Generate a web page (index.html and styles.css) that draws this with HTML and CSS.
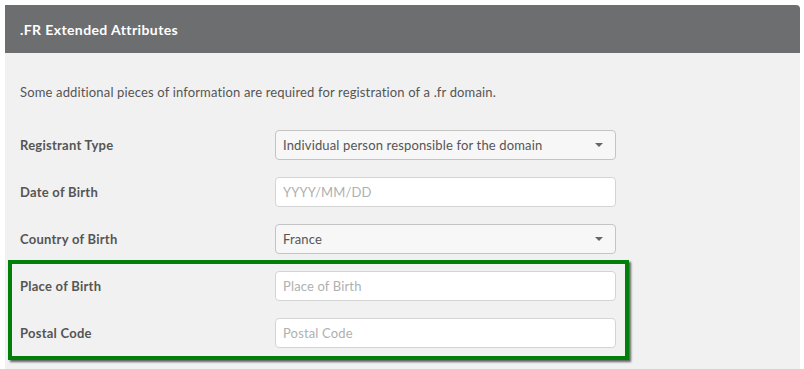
FILE: index.html
```html
<!DOCTYPE html>
<html lang="en">
<head>
    <meta charset="UTF-8">
    <title>.FR Extended Attributes</title>
    <link rel="stylesheet" href="styles.css">
</head>
<body>
    <div class="panel">
        <div class="panel-heading">
            <h3>.FR Extended Attributes</h3>
        </div>
        <div class="panel-body">
            <p class="intro">Some additional pieces of information are required for registration of a .fr domain.</p>
            <div class="form-row">
                <label>Registrant Type</label>
                <div class="select">Individual person responsible for the domain<span class="caret"></span></div>
            </div>
            <div class="form-row">
                <label>Date of Birth</label>
                <input type="text" placeholder="YYYY/MM/DD">
            </div>
            <div class="form-row">
                <label>Country of Birth</label>
                <div class="select">France<span class="caret"></span></div>
            </div>
            <div class="form-row">
                <label>Place of Birth</label>
                <input type="text" placeholder="Place of Birth">
            </div>
            <div class="form-row">
                <label>Postal Code</label>
                <input type="text" placeholder="Postal Code">
            </div>
            <div class="highlight"></div>
        </div>
    </div>
</body>
</html>
```

FILE: styles.css
```css
body {
    font-family: Lato, "Open Sans", sans-serif;
    margin: 0;
    padding: 5px 4px 0 5px;
    background-color: #fff;
    color: #555;
}
.panel {
    border-radius: 0 4px 4px 0;
    overflow: hidden;
}
.panel-heading {
    background-color: #6d6e70;
    height: 48px;
    padding: 0 15px;
    display: flex;
    align-items: center;
}
.panel-heading h3 {
    margin: 0;
    color: #fff;
    font-size: 14px;
    font-weight: bold;
    letter-spacing: 0.4px;
}
.panel-body {
    position: relative;
    background-color: #f1f1f1;
    padding: 30px 15px 17px 15px;
}
.intro {
    margin: 0 0 29px 0;
    font-size: 13px;
    line-height: 18px;
    letter-spacing: 0.15px;
}
.form-row {
    display: flex;
    align-items: center;
    height: 30px;
    margin-bottom: 17px;
}
.form-row:last-of-type {
    margin-bottom: 0;
}
.form-row label {
    width: 255px;
    font-size: 13px;
    font-weight: bold;
    letter-spacing: 0.25px;
}
.form-row input,
.select {
    width: 341px;
    height: 30px;
    box-sizing: border-box;
    padding: 0 7px;
    border: 1px solid #d4d4d4;
    border-radius: 4px;
    background-color: #fff;
    font-family: inherit;
    font-size: 13px;
    letter-spacing: 0.15px;
    color: #555;
}
.form-row input::placeholder {
    color: #b0b0b0;
}
.select {
    display: flex;
    align-items: center;
    justify-content: space-between;
    background-color: #f7f7f7;
    border-color: #c4c4c4;
    padding-right: 12px;
}
.caret {
    width: 0;
    height: 0;
    border-left: 4px solid transparent;
    border-right: 4px solid transparent;
    border-top: 4px solid #666;
}
.highlight {
    position: absolute;
    left: 3px;
    top: 207px;
    width: 613px;
    height: 92px;
    border: 4px solid #00800a;
    box-shadow: 2px 2px 2px rgba(0, 0, 0, 0.6);
}
```
